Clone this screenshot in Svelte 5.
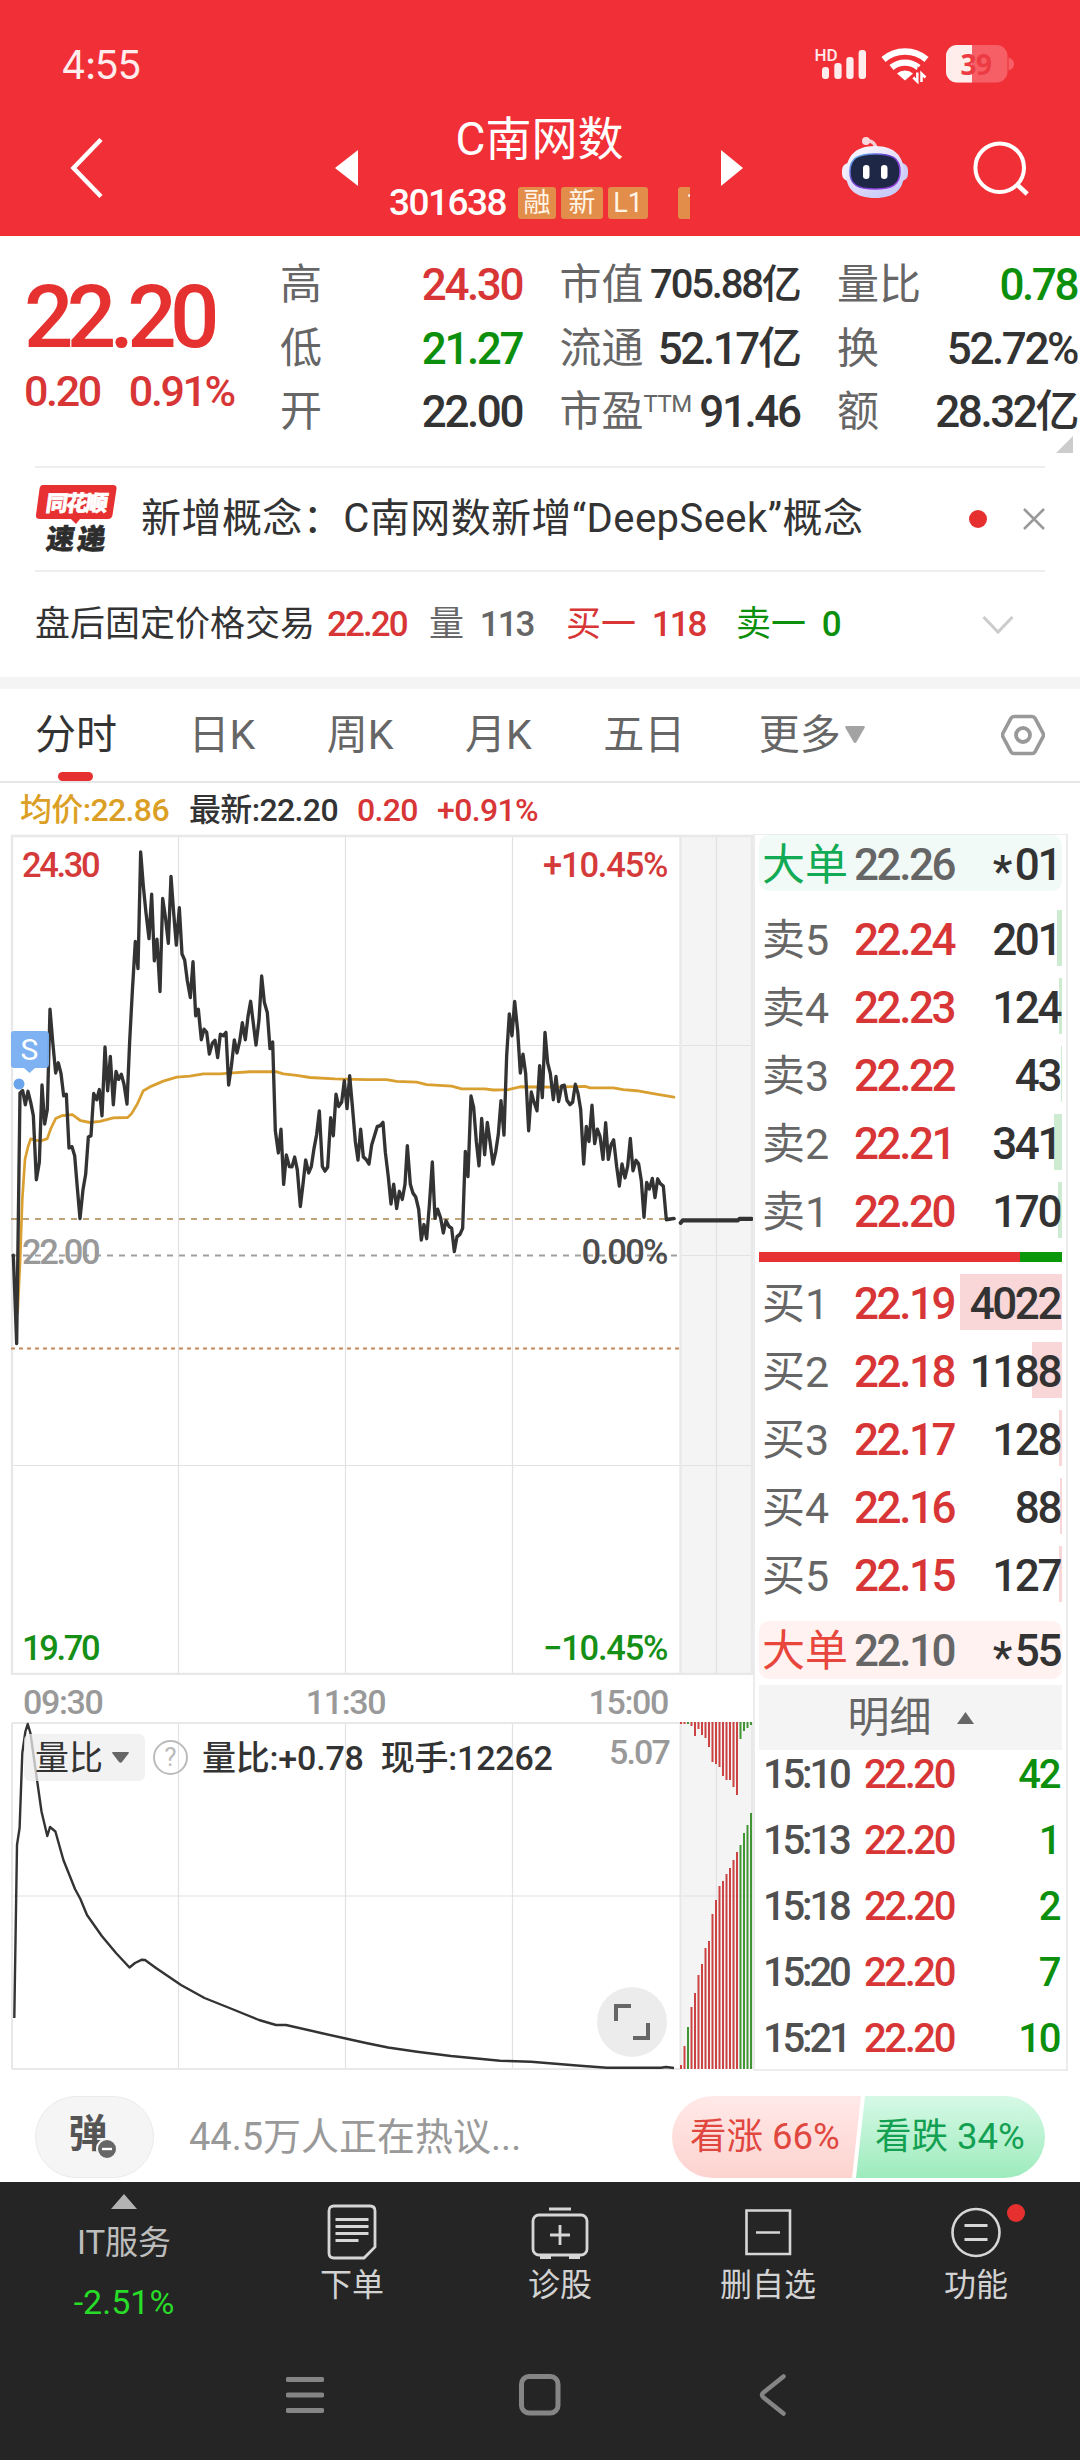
<script lang="ts">
	interface Quote {
		label: string;
		sup?: string;
		value: string;
		tone?: string;
		small?: boolean;
	}

	interface Level {
		label: string;
		price: string;
		volume: number;
		bar: number;
	}

	const quotes: Quote[] = [
		{ label: '高', value: '24.30', tone: 'up' },
		{ label: '市值', value: '705.88亿', small: true },
		{ label: '量比', value: '0.78', tone: 'down' },
		{ label: '低', value: '21.27', tone: 'down' },
		{ label: '流通', value: '52.17亿' },
		{ label: '换', value: '52.72%' },
		{ label: '开', value: '22.00' },
		{ label: '市盈', sup: 'TTM', value: '91.46' },
		{ label: '额', value: '28.32亿' }
	];

	const asks: Level[] = [
		{ label: '卖5', price: '22.24', volume: 201, bar: 5 },
		{ label: '卖4', price: '22.23', volume: 124, bar: 3 },
		{ label: '卖3', price: '22.22', volume: 43, bar: 1 },
		{ label: '卖2', price: '22.21', volume: 341, bar: 8 },
		{ label: '卖1', price: '22.20', volume: 170, bar: 4 }
	];

	const bids: Level[] = [
		{ label: '买1', price: '22.19', volume: 4022, bar: 102 },
		{ label: '买2', price: '22.18', volume: 1188, bar: 30 },
		{ label: '买3', price: '22.17', volume: 128, bar: 3 },
		{ label: '买4', price: '22.16', volume: 88, bar: 2 },
		{ label: '买5', price: '22.15', volume: 127, bar: 3 }
	];

	const trades = [
		{ time: '15:10', price: '22.20', volume: 42 },
		{ time: '15:13', price: '22.20', volume: 1 },
		{ time: '15:18', price: '22.20', volume: 2 },
		{ time: '15:20', price: '22.20', volume: 7 },
		{ time: '15:21', price: '22.20', volume: 10 }
	];

	// price and average lines live on a finer grid than the chart
	const priceLine =
		'40,1219 50,1466 60,765 68,758 76,797 84,760 92,790 100,828 109,1007 118,958 126,742 134,851 142,810 150,530 158,620 167,708 175,680 183,710 191,772 199,768 207,918 216,915 224,940 232,1030 240,1116 249,1035 257,992 265,888 273,884 281,766 290,783 298,755 306,828 315,636 323,758 331,662 340,797 348,704 356,726 364,712 372,740 381,795 389,620 397,480 406,340 414,416 422,90 430,185 438,260 447,332 455,208 463,394 471,334 480,480 488,220 496,270 505,345 513,158 521,260 529,350 538,246 546,375 554,392 562,450 571,497 579,397 587,548 595,530 604,615 612,586 620,594 628,655 637,625 645,617 653,665 661,600 670,604 678,595 686,742 694,690 703,616 711,652 719,620 727,568 736,615 744,550 752,508 760,570 768,630 777,560 785,437 793,510 802,540 810,640 818,622 826,870 835,932 843,866 851,1020 859,938 868,970 876,971 884,944 892,980 901,1082 909,1020 917,952 926,988 934,970 942,920 950,880 958,815 967,970 975,983 983,972 992,834 1000,884 1008,768 1016,802 1025,790 1033,730 1041,808 1049,716 1057,800 1066,900 1074,952 1082,866 1090,943 1098,950 1107,963 1115,910 1132,858 1140,856 1149,847 ' +
		'1156,930 1165,1000 1173,1075 1181,1020 1190,1088 1198,1040 1207,1062 1215,1020 1222,912 1231,1020 1239,1045 1247,1055 1256,1090 1264,1176 1272,1133 1280,1172 1288,1080 1297,958 1305,1115 1313,1090 1322,1115 1330,1156 1338,1122 1347,1138 1355,1143 1363,1208 1371,1167 1380,1160 1388,1143 1396,928 1404,998 1413,773 1421,805 1429,900 1437,968 1445,836 1454,937 1462,847 1470,900 1479,963 1487,930 1495,880 1503,786 1512,882 1520,660 1528,543 1536,604 1544,508 1553,590 1561,708 1569,656 1577,710 1586,870 1594,762 1602,790 1611,814 1619,688 1627,777 1635,595 1643,680 1651,710 1660,783 1668,718 1676,788 1685,745 1693,743 1701,785 1710,797 1718,790 1726,740 1734,765 1742,810 1751,963 1759,858 1767,900 1776,799 1784,906 1792,866 1800,885 1809,950 1817,848 1825,950 1833,910 1841,896 1850,970 1858,1025 1866,963 1875,1002 1883,970 1891,892 1899,982 1908,953 1916,963 1924,1010 1932,1112 1940,1015 1948,1033 1957,1004 1965,1057 1973,1005 1981,1018 1990,1025 1999,1119 2022,1116';
	const avgLine =
		'53,1378 60,1240 67,1060 75,950 84,915 92,893 110,897 125,898 142,892 152,865 167,836 185,828 217,825 242,842 270,847 300,844 340,834 383,833 395,822 412,795 430,758 455,745 490,731 530,720 570,717 610,711 660,711 700,708 750,705 830,705 850,711 890,715 930,721 1005,725 1100,727 1160,727 1190,732 1250,734 1280,741 1355,745 1385,753 1455,753 1480,756 1525,755 1560,747 1660,748 1755,746 1770,750 1840,750 1870,755 1910,758 1960,766 2022,776';
	const ratioLine =
		'14.3,296 17,123 19.6,106 22.3,31 25.4,9.5 27.7,2 30.4,11 36.6,55 41.5,89.5 47.3,114 50,105 55.4,109.5 63.4,138 75,167 80.4,177 87,193 101.8,214 116,231 129.5,245.5 135,241 142,237.7 145,238 156,246 181,263 204.5,276 232,287 259,298 276,303 286,303 321,311 366,321 388,325.5 417,329.7 451,334 500,338.7 531,339.7 580,343.7 607,345.7 661,345.7 666,345 674,346';

	// after-hours volume: [height from the bottom, height from the top]
	const afterHours = [
		[4, 2], [23, 2], [42, 2], [62, 4], [76, 14], [94, 7], [105, 13], [121, 16], [128, 25], [155, 40], [169, 42],
		[183, 45], [188, 54], [195, 58], [201, 58], [209, 65], [217, 73], [224, 17], [236, 9], [244, 6], [256, 3]
	];
	const isDown = (i: number) => i === 2 || i > 16;

	const gridX = [178.5, 345.5, 512.5];
</script>

<div class="screen">
	<header>
		<div class="status">
			<span class="clock">4:55</span>
			<svg width="204" height="44" viewBox="812 42 204 44">
				<text x="814.5" y="60.5" font-size="17" font-weight="500" fill="#ffe9ea">HD</text>
				<g fill="#ffecec">
					<rect x="822" y="67" width="7" height="12" rx="3" />
					<rect x="834.3" y="63" width="7.3" height="16" rx="3" />
					<rect x="846.3" y="57" width="7.3" height="22" rx="3" />
					<rect x="858.6" y="50" width="7.4" height="29" rx="3" />
				</g>
				<g fill="none" stroke="#fff" stroke-width="6.4">
					<path d="M883.5 59.5a33 33 0 0 1 43 0" />
					<path d="M891.5 67.5a21 21 0 0 1 27 0" />
				</g>
				<path d="M897 73.5a12 12 0 0 1 16 0l-8 7z" fill="#fff" />
				<path d="M917 72v10l-4.500-4M920.500 82.500v-9l4.500 4.500" fill="none" stroke="#f12f37" stroke-width="6" />
				<path d="M917.300 72.500v9l-4-4M921.500 82v-8.500l4 4" fill="none" stroke="#fff" stroke-width="2.500" />
				<rect x="946" y="45" width="61.500" height="37.500" rx="11" fill="#f75f66" />
				<path d="M972 45v37.500h-15a11 11 0 0 1-11-11V56a11 11 0 0 1 11-11z" fill="#ffedec" />
				<path d="M1008.500 57.500q5.500 1.500 5.500 6.500t-5.500 6.500z" fill="#f75f66" />
				<text class="battery" x="960.5" y="74.5">39</text>
			</svg>
		</div>
		<div class="titlebar">
			<svg class="back" width="36" height="64" viewBox="0 0 36 64"><path d="M32 3.500 4.500 32 32 60.500" fill="none" stroke="#fff" stroke-width="4.500" /></svg>
			<svg width="23" height="36" viewBox="0 0 23 36"><path d="M23 0v36L0 18z" fill="#fff" /></svg>
			<div class="title">
				<h1>C南网数</h1>
				<div class="code">
					<span class="num">301638</span>
					<i>融</i><i>新</i><i>L1</i><i class="cut">1</i>
				</div>
			</div>
			<svg width="23" height="36" viewBox="0 0 23 36"><path d="M0 0v36l22-18z" fill="#fff" /></svg>
			<svg class="robot" width="68" height="64" viewBox="841 136 68 64">
				<defs>
					<linearGradient id="shell" x1="0" y1="0" x2="0.6" y2="1">
						<stop offset="0" stop-color="#fff" />
						<stop offset="0.55" stop-color="#e4defa" />
						<stop offset="1" stop-color="#c9ccf7" />
					</linearGradient>
					<linearGradient id="rim" x1="0" y1="0" x2="1" y2="1">
						<stop offset="0" stop-color="#5bc6e8" />
						<stop offset="0.4" stop-color="#6a3fd0" />
						<stop offset="1" stop-color="#a53fe0" />
					</linearGradient>
				</defs>
				<path d="M866 141q9-1 10 8" fill="none" stroke="#f9cdd6" stroke-width="3.200" />
				<circle cx="866" cy="141" r="4" fill="#fbd9df" />
				<rect x="842" y="163" width="14" height="18" rx="7" fill="#f2edfc" />
				<rect x="894" y="163" width="14" height="18" rx="7" fill="#cfcdf6" />
				<path d="M875 146c20 0 29 11 29 27s-9 25-29 25-29-9-29-25 9-27 29-27z" fill="url(#shell)" />
				<path d="M875 154c17 0 25 4 25 17.500S892 189 875 189s-25-4-25-17.500S858 154 875 154z" fill="#1f2747" stroke="url(#rim)" stroke-width="1.500" />
				<rect x="863" y="165" width="6.500" height="14" rx="3.200" fill="#fff" />
				<rect x="881" y="165" width="6.500" height="14" rx="3.200" fill="#fff" />
			</svg>
			<svg class="search" width="58" height="58" viewBox="972 140 58 58">
				<circle cx="999.700" cy="168.700" r="24.300" fill="none" stroke="#fff" stroke-width="4" />
				<path d="M1017 185.500l10.200 9.500" stroke="#fff" stroke-width="4.500" />
			</svg>
		</div>
	</header>

	<section class="quote">
		<div class="last up">
			<strong>22.20</strong>
			<div class="num"><span>0.20</span><span>0.91%</span></div>
		</div>
		<div class="quote-grid">
			{#each quotes as q (q.label)}
				<div class="cell">
					<span class="label">{q.label}{#if q.sup}<sup>{q.sup}</sup>{/if}</span>
					<span class="num {q.tone ?? ''}" class:small={q.small}>{q.value}</span>
				</div>
			{/each}
		</div>
		<svg class="corner" width="17" height="17" viewBox="0 0 17 17"><path d="M17 0v17H0z" fill="#ccc" /></svg>
	</section>

	<section class="news">
		<svg class="brand" width="84" height="70" viewBox="35 484 84 70">
			<path d="M43 485h70q4 0 3.500 4l-4 26q-.8 4-4.500 4H80l-4 5-5-5H40q-4.500 0-4-4l3.500-26q.5-4 3.500-4z" fill="#e63031" />
			<text class="logo" x="45" y="511" font-size="22" textLength="62" fill="#fff" stroke="#fff" transform="skewX(-8)" style:transform-origin="45px 511px">同花顺</text>
			<text class="logo" x="45.500" y="549" font-size="28" textLength="59" fill="#2d2d2d" stroke="#2d2d2d" transform="skewX(-8)" style:transform-origin="45px 548px">速递</text>
		</svg>
		<p>新增概念：C南网数新增“DeepSeek”概念</p>
		<span class="dot"></span>
		<svg width="22" height="22" viewBox="0 0 22 22"><path d="M1 1l20 20M21 1 1 21" stroke="#999" stroke-width="2.500" /></svg>
	</section>

	<section class="fixed">
		<span class="name">盘后固定价格交易</span>
		<span class="num up price">22.20</span>
		<span class="muted vol">量 <b class="num">113</b></span>
		<span class="up buy">买一 <b class="num">118</b></span>
		<span class="down">卖一 <b class="num">0</b></span>
		<svg width="32" height="20" viewBox="0 0 32 20"><path d="M1.500 2 16 17 30.500 2" fill="none" stroke="#ccc" stroke-width="3" /></svg>
	</section>

	<nav class="tabs">
		<span class="active">分时</span>
		<span>日K</span>
		<span>周K</span>
		<span>月K</span>
		<span>五日</span>
		<span class="more">更多<svg width="20" height="17" viewBox="0 0 20 17"><path d="M1.500 0h17q2 0 1 2l-8 14q-1.500 2-3 0L.5 2q-1-2 1-2z" fill="#a3a3a3" /></svg></span>
		<svg class="gear" width="44" height="42" viewBox="0 0 44 42">
			<path d="M13 2.500h18q2 0 3 1.700l8 15q1 1.800 0 3.600l-8 15q-1 1.700-3 1.700H13q-2 0-3-1.700l-8-15q-1-1.800 0-3.600l8-15q1-1.700 3-1.700z" fill="none" stroke="#999" stroke-width="3.600" />
			<circle cx="22" cy="21" r="7" fill="none" stroke="#999" stroke-width="3.800" />
		</svg>
	</nav>

	<div class="legend">
		<span class="avg">均价:22.86</span><span class="now">最新:22.20</span><span class="up diff">0.20</span><span class="up">+0.91%</span>
	</div>

	<main>
		<div class="charts">
			<svg width="753" height="841" viewBox="0 834 753 841">
				<rect x="680" y="835" width="73" height="840" fill="#f4f4f4" />
				<g stroke="#e2e2e2" stroke-width="1.200">
					{#each gridX as x}<path d="M{x} 835V1675" />{/each}
					<path d="M716.500 835V1675M12 1045.500H753M680 1255.500H753M12 1465.500H753" />
				</g>
				<path d="M12 836H753M12 1674H753M12 835V1675M680.500 835V1675M752 835V1675" stroke="#e8e8e8" stroke-width="2.400" />
				<path d="M11 1219H676" stroke="#bda27c" stroke-width="2" stroke-dasharray="6 6" />
				<path d="M11 1255.500H677" stroke="#a0a0a0" stroke-width="1.800" stroke-dasharray="6 6" />
				<path d="M11 1348.500H679" stroke="#c68b55" stroke-width="2" stroke-dasharray="4 4" />
				<g class="axis">
					<text x="22" y="877" textLength="78.5" fill="#d53a3a">24.30</text>
					<text x="543" y="877" textLength="125.5" fill="#d53a3a">+10.45%</text>
					<text x="22" y="1264" textLength="78.5" fill="#999">22.00</text>
					<text x="581.5" y="1264" textLength="87" fill="#4d4d4d">0.00%</text>
					<text x="22" y="1660" textLength="78.5" fill="#168f16">19.70</text>
					<text x="543" y="1660" textLength="125.5" fill="#168f16">−10.45%</text>
				</g>
				<g transform="translate(0 820) scale(0.33333 0.35714)" fill="none" stroke-linejoin="round" stroke-linecap="round">
					<polyline points={avgLine} stroke="#d99f30" stroke-width="8" />
					<polyline points={priceLine} stroke="#333" stroke-width="10" />
					<path d="M2042 1128 2048 1121H2214L2218 1117H2255" stroke="#333" stroke-width="11.500" />
				</g>
				<path d="M14 1031h31q4 0 4 4v29q0 4-4 4H35l-5.500 5-5.500-5H14q-3 0-3-3v-31q0-3 3-3z" fill="#77aef1" fill-opacity="0.95" />
				<text x="29.500" y="1060" text-anchor="middle" font-size="30" font-weight="400" fill="#fff">S</text>
				<circle cx="19" cy="1084" r="5.500" fill="#6aa4ea" />
			</svg>

			<div class="times"><span>09:30</span><span>11:30</span><span>15:00</span></div>

			<div class="ratio">
				<svg class="plot" width="753" height="348" viewBox="0 0 753 348">
					<rect x="680" y="1" width="73" height="346" fill="#f4f4f4" />
					<g stroke="#e2e2e2" stroke-width="1.200">
						{#each gridX as x}<path d="M{x} 1V347" />{/each}
						<path d="M716.500 1V347M12 174H753" />
					</g>
					<path d="M12 1H753M12 347H680M12 1V347M680.500 1V347M752 1V347" stroke="#e8e8e8" stroke-width="2" />
					{#each afterHours as [low, high], i}
						<g class:down={isDown(i)} class="volume">
							<rect x={680 + i * 3.5} y={347 - low} width="2" height={low} />
							<rect x={680 + i * 3.5} y="0" width="2" height={high} />
						</g>
					{/each}
					<polyline points={ratioLine} fill="none" stroke="#333" stroke-width="2.400" stroke-linejoin="round" />
				</svg>
				<div class="ratio-bar">
					<span class="picker">量比<svg width="17" height="11" viewBox="0 0 17 11"><path d="M1 0h15q1.500 0 .5 1.500l-6.500 8.500q-1.500 1.500-3 0L.5 1.500Q-.5 0 1 0z" fill="#666" /></svg></span>
					<span class="help">?</span>
					<span class="current">量比:+0.78</span>
					<span class="current hand">现手:12262</span>
					<span class="num max">5.07</span>
				</div>
				<div class="expand">
					<svg width="36" height="36" viewBox="0 0 36 36"><path d="M2 17V2h15M34 19v15H19" fill="none" stroke="#666" stroke-width="4" /></svg>
				</div>
			</div>
		</div>

		<aside class="num">
			<div class="big sell"><span>大单</span><span>22.26</span><b><i>*</i>01</b></div>
			<div class="levels">
				{#each asks as level (level.label)}
					<div class="level ask">
						<span class="bar" style:width="{level.bar}px"></span>
						<span class="side">{level.label}</span><span class="up">{level.price}</span><b>{level.volume}</b>
					</div>
				{/each}
			</div>
			<div class="balance"><span style:width="86.3%"></span></div>
			<div class="levels">
				{#each bids as level (level.label)}
					<div class="level bid">
						<span class="bar" style:width="{level.bar}px"></span>
						<span class="side">{level.label}</span><span class="up">{level.price}</span><b>{level.volume}</b>
					</div>
				{/each}
			</div>
			<div class="big purchase"><span>大单</span><span>22.10</span><b><i>*</i>55</b></div>
			<div class="detail">明细<svg width="17" height="12" viewBox="0 0 17 12"><path d="M8.500 0 17 12H0z" fill="#666" /></svg></div>
			<div class="trades">
				{#each trades as t (t.time)}
					<div><span>{t.time}</span><span class="up">{t.price}</span><b class="down">{t.volume}</b></div>
				{/each}
			</div>
		</aside>
	</main>

	<section class="talk">
		<div class="danmu">
			<span>弹</span>
			<svg width="22" height="22" viewBox="0 0 22 22"><circle cx="11" cy="11" r="10" fill="#666" stroke="#f5f5f5" stroke-width="2" /><path d="M6 11h10" stroke="#fff" stroke-width="2.400" /></svg>
		</div>
		<p>44.5万人正在热议...</p>
		<div class="vote">
			<span class="bull">看涨 66%</span>
			<span class="bear">看跌 34%</span>
		</div>
	</section>

	<footer>
		<div class="actions">
			<div class="sector">
				<svg width="26" height="15" viewBox="0 0 26 15"><path d="M13 0 26 15H0z" fill="#b3b3b3" /></svg>
				<span>IT服务</span>
				<em>-2.51%</em>
			</div>
			<div class="action">
				<svg width="60" height="56" viewBox="0 0 60 56" fill="none" stroke="#d6d6d6" stroke-width="2.800">
					<path d="M12 2h36q5 0 5 5v36L42 54H12q-5 0-5-5V7q0-5 5-5z" />
					<path d="M13.500 15.500h33M13.500 22.500h33M13.500 29.500h33M13.500 36.500h23" />
				</svg>
				<span>下单</span>
			</div>
			<div class="action">
				<svg width="60" height="56" viewBox="0 0 60 56" fill="none" stroke="#d6d6d6" stroke-width="2.800">
					<rect x="3" y="11" width="54" height="40" rx="6" />
					<path d="M19 5h22M30 21v20M20 31h20" />
					<path d="M10 53h11M39 53h11" stroke-width="4" />
				</svg>
				<span>诊股</span>
			</div>
			<div class="action">
				<svg width="60" height="56" viewBox="0 0 60 56" fill="none" stroke="#d6d6d6" stroke-width="2.600">
					<path d="M8.500 6.500h43.500v43.500H8.500zM18 28.500h24" />
				</svg>
				<span>删自选</span>
			</div>
			<div class="action">
				<svg width="60" height="56" viewBox="0 0 60 56" fill="none" stroke="#d6d6d6" stroke-width="2.600">
					<circle cx="30" cy="28.500" r="23.500" />
					<path d="M18.500 21.500h23M18.500 35.500h23" stroke-width="3" />
				</svg>
				<span>功能</span>
				<i class="badge"></i>
			</div>
		</div>
		<div class="keys">
			<svg width="38" height="42" viewBox="0 0 38 42"><path d="M2 5.500h34M2 21h34M2 36.500h34" stroke="#858585" stroke-width="5" stroke-linecap="round" /></svg>
			<svg width="42" height="42" viewBox="0 0 42 42"><rect x="2.500" y="2.500" width="36.500" height="36.500" rx="7.500" fill="none" stroke="#858585" stroke-width="5" /></svg>
			<svg width="28" height="42" viewBox="0 0 28 42"><path d="M24.500 2.500 4.500 18.500q-3 2.500 0 5l20 16" fill="none" stroke="#858585" stroke-width="4.500" stroke-linecap="round" /></svg>
		</div>
	</footer>
</div>

<style>
	:global(body) {
		background: #fff;
	}

	.screen {
		width: 1080px;
		height: 2460px;
		overflow: hidden;
		display: flex;
		flex-direction: column;
		font-family: Roboto, 'Noto Sans CJK SC', sans-serif;
		color: #333;
		background: #fff;
		white-space: nowrap;
	}

	.screen :is(section, header, footer, nav, main, .legend) {
		box-sizing: border-box;
		flex-shrink: 0;
	}

	svg {
		display: block;
		flex-shrink: 0;
	}

	b,
	i,
	em {
		font-weight: inherit;
		font-style: normal;
	}

	.num {
		font-weight: 500;
		letter-spacing: -0.055em;
	}

	.up {
		color: #d83636;
	}
	.down {
		color: #0c8f0c;
	}
	.muted {
		color: #666;
	}

	/* header */
	header {
		height: 236px;
		background: #f12f37;
		color: #fff;
	}

	.status {
		display: flex;
		align-items: center;
		justify-content: space-between;
		height: 44px;
		padding: 42px 64px 14px 61px;
	}
	.clock {
		font-family: Inter, Roboto, sans-serif;
		font-size: 39px;
		letter-spacing: -0.03em;
		color: #ffeced;
	}
	.battery {
		font: bold 28px 'Noto Sans', sans-serif;
		letter-spacing: -0.5px;
		fill: #ec3b43;
	}

	.titlebar {
		display: flex;
		align-items: center;
		height: 136px;
	}
	.back {
		margin-left: 69px;
		margin-right: 230px;
	}
	.title {
		align-self: flex-start;
		width: 363px;
		display: flex;
		flex-direction: column;
		align-items: center;
	}
	h1 {
		margin: 7px 0 0;
		font-size: 46px;
		font-weight: 400;
		line-height: 64px;
	}
	.code {
		display: flex;
		align-items: center;
		width: 301px;
		height: 32px;
		margin-top: 16px;
		overflow-x: clip;
		font-size: 37px;
		line-height: 34px;
	}
	.code .num {
		letter-spacing: -0.041em;
	}
	.code i {
		flex-shrink: 0;
		box-sizing: border-box;
		width: 40px;
		height: 32px;
		margin-left: 5px;
		border-radius: 3px;
		background: #e38d4a;
		color: #fff5e6;
		font-size: 27px;
		line-height: 32px;
		text-align: center;
	}
	.code i:nth-of-type(1) {
		width: 38px;
		margin-left: auto;
	}
	.code i:nth-of-type(2) {
		width: 42px;
	}
	.code .cut {
		width: 12px;
		margin-left: 30px;
		padding-left: 8px;
		border-radius: 3px 0 0 3px;
		text-align: left;
	}
	.robot {
		margin-left: 97px;
	}
	.search {
		margin-left: 63px;
	}

	/* quote */
	.quote {
		display: flex;
		height: 230px;
		padding: 16px 0 0 24px;
		position: relative;
	}
	.last {
		width: 256px;
	}
	.last strong {
		display: block;
		margin-top: 19px;
		font-size: 87px;
		font-weight: 500;
		line-height: 92px;
		letter-spacing: -0.076em;
		color: #e63131;
	}
	.last div {
		display: flex;
		gap: 29px;
		margin-top: 3px;
		font-size: 43px;
		line-height: 50px;
	}
	.quote-grid {
		display: grid;
		grid-template-columns: 242px 240px 240px;
		grid-auto-rows: 63.5px;
		column-gap: 37.5px;
	}
	.cell {
		display: flex;
		justify-content: space-between;
		font-size: 44px;
		line-height: 66px;
	}
	.label {
		font-size: 42px;
		color: #666;
	}
	.cell .small {
		font-size: 40px;
	}
	sup {
		font-size: 24px;
		line-height: 1;
		vertical-align: 14px;
		letter-spacing: -0.5px;
	}
	.corner {
		position: absolute;
		right: 7px;
		bottom: 13px;
	}

	/* news */
	.news {
		display: flex;
		align-items: center;
		height: 106px;
		margin: 0 35px;
		border-top: 2px solid #eee;
		border-bottom: 2px solid #eee;
	}
	.news p {
		flex: 1;
		margin: 0 0 0 22px;
		font-size: 40px;
		line-height: 60px;
		letter-spacing: 0.45px;
	}
	.brand {
		overflow: visible;
	}
	.logo {
		font-family: 'Noto Sans CJK SC', sans-serif;
		font-weight: 900;
		stroke-width: 0.6px;
	}
	.dot {
		width: 18px;
		height: 18px;
		margin-right: 36px;
		border-radius: 50%;
		background: #e63030;
	}

	.fixed {
		display: flex;
		align-items: center;
		height: 105px;
		padding: 0 66px 0 35px;
		font-size: 35px;
		line-height: 105px;
	}
	.fixed .name {
		width: 292px;
	}
	.fixed .price {
		width: 102px;
	}
	.fixed .vol {
		width: 137px;
	}
	.fixed .buy {
		width: 170px;
	}
	.fixed b {
		margin-left: 7px;
	}
	.fixed svg {
		margin-left: auto;
	}

	/* tabs */
	.tabs {
		display: flex;
		align-items: center;
		height: 106px;
		padding: 0 35px;
		border-top: 12px solid #f4f4f4;
		border-bottom: 2px solid #e6e6e6;
		font-size: 41px;
		line-height: 92px;
		color: #666;
	}
	.tabs span {
		margin-right: 71.5px;
	}
	.tabs .active {
		position: relative;
		color: #333;
	}
	.tabs .active::after {
		content: '';
		position: absolute;
		left: 23px;
		bottom: 0;
		width: 35px;
		height: 9px;
		border-radius: 5px;
		background: #e63030;
	}
	.tabs .more {
		margin-left: 2px;
	}
	.tabs span svg {
		display: inline-block;
		margin-left: 4px;
		vertical-align: 6px;
	}
	.tabs .gear {
		margin-left: auto;
	}

	.legend {
		display: flex;
		height: 51px;
		padding-left: 20px;
		font-size: 32px;
		font-weight: 500;
		line-height: 55px;
		letter-spacing: -0.02em;
	}
	.avg {
		width: 169px;
		color: #dc9f25;
	}
	.now {
		width: 168px;
	}
	.diff {
		width: 80px;
	}

	/* charts */
	main {
		display: flex;
		height: 1237px;
	}
	.charts {
		width: 753px;
	}
	.axis {
		font-size: 34.5px;
		font-weight: 500;
	}
	.times {
		display: flex;
		justify-content: space-between;
		height: 47px;
		padding: 0 85px 0 23px;
		font-size: 34px;
		font-weight: 500;
		letter-spacing: -0.04em;
		line-height: 54px;
		color: #999;
	}
	.ratio {
		position: relative;
		height: 348px;
	}
	.plot {
		position: absolute;
	}
	.volume {
		fill: #cb4343;
	}
	.volume.down {
		fill: #429535;
	}
	.ratio-bar {
		position: relative;
		display: flex;
		align-items: center;
		height: 47px;
		padding: 12px 84px 0 24px;
		font-size: 34px;
		line-height: 46px;
	}
	.picker {
		display: flex;
		align-items: center;
		gap: 9px;
		box-sizing: border-box;
		width: 121px;
		height: 47px;
		padding-left: 11px;
		border-radius: 6px;
		background: rgba(238, 238, 238, 0.75);
	}
	.help {
		box-sizing: border-box;
		width: 35px;
		height: 35px;
		margin: 0 14px 0 8px;
		border: 2.5px solid #bbb;
		border-radius: 50%;
		font-size: 26px;
		line-height: 31px;
		text-align: center;
		color: #bbb;
	}
	.current {
		font-weight: 500;
		letter-spacing: -0.2px;
	}
	.hand {
		margin-left: 17px;
	}
	.max {
		margin-left: auto;
		margin-top: -11px;
		color: #999;
	}
	.expand {
		position: absolute;
		left: 597px;
		top: 265px;
		display: grid;
		place-items: center;
		width: 70px;
		height: 70px;
		border-radius: 50%;
		background: #ececec;
	}

	/* order book */
	aside {
		box-sizing: border-box;
		width: 315px;
		height: 1237px;
		padding: 0 4px;
		border: 2px solid #ececec;
		border-top-width: 1px;
		font-size: 44px;
	}
	.big,
	.level {
		display: grid;
		grid-template-columns: 92px 1fr auto;
		height: 56px;
		padding: 0 2px 0 3px;
		line-height: 60px;
	}
	.big {
		border-radius: 10px;
		color: #666;
	}
	.big span:first-child {
		font-size: 43px;
		font-weight: 400;
		letter-spacing: 0;
	}
	.big b,
	.level b {
		color: #333;
	}
	.big i {
		display: inline-block;
		margin-right: 5px;
		line-height: 40px;
		vertical-align: -7px;
	}
	.sell {
		background: #f1faf6;
	}
	.sell span:first-child {
		color: #11ab55;
	}
	.purchase {
		margin-top: 19px;
		height: 58px;
		background: #fff2f1;
	}
	.purchase span:first-child {
		color: #e8453c;
	}
	.levels {
		display: flex;
		flex-direction: column;
		gap: 12px;
	}
	.sell + .levels {
		margin-top: 19px;
	}
	.level {
		position: relative;
	}
	.level span,
	.level b {
		position: relative;
	}
	.level .side {
		font-size: 43px;
		font-weight: 400;
		letter-spacing: 0;
		color: #666;
	}
	.level .bar {
		position: absolute;
		top: 0;
		right: 0;
		height: 56px;
	}
	.ask .bar {
		background: #cdebd0;
	}
	.bid .bar {
		background: #f9d6d7;
	}
	.balance {
		height: 10px;
		margin: 14px 0 12px;
		background: #0a980a;
	}
	.balance span {
		display: block;
		height: 10px;
		background: #e63232;
	}
	.detail {
		display: flex;
		align-items: center;
		justify-content: center;
		gap: 25px;
		height: 65px;
		margin-top: 6px;
		background: #f4f4f4;
		font-size: 42px;
		font-weight: 400;
		line-height: 64px;
		letter-spacing: 0;
		color: #666;
	}
	.trades {
		margin-top: -9px;
		font-size: 40px;
	}
	.trades div {
		display: grid;
		grid-template-columns: 101px 1fr auto;
		height: 66px;
		padding: 0 3px 0 4px;
		line-height: 68px;
		color: #505050;
	}
	.trades span:first-child {
		letter-spacing: -0.08em;
	}

	/* discussion */
	.talk {
		display: flex;
		height: 111px;
		padding: 25px 35px 4px;
	}
	.danmu {
		box-sizing: border-box;
		position: relative;
		width: 119px;
		height: 82px;
		border: 1px solid #ebebeb;
		border-radius: 41px;
		background: #f5f5f5;
		font-size: 39px;
		font-weight: 700;
		line-height: 75px;
		text-align: center;
		color: #555;
		padding-right: 13px;
	}
	.danmu svg {
		position: absolute;
		left: 60px;
		top: 41px;
	}
	.talk p {
		flex: 1;
		margin: 0 0 0 35px;
		font-size: 38px;
		line-height: 82px;
		color: #999;
	}
	.vote {
		display: flex;
		height: 82px;
		overflow: hidden;
		border-radius: 41px;
		font-size: 36.5px;
		line-height: 82px;
	}
	.vote span {
		box-sizing: border-box;
		height: 82px;
	}
	.bull {
		width: 189px;
		padding-left: 18px;
		background: linear-gradient(#ffe9e8, #fdd3cf);
		clip-path: polygon(0 0, 189px 0, 180px 100%, 0 100%);
		color: #e0473f;
	}
	.bear {
		width: 189px;
		margin-left: -5px;
		padding-left: 19px;
		background: linear-gradient(#d6f9e6, #9debbd);
		clip-path: polygon(9px 0, 100% 0, 100% 100%, 0 100%);
		color: #14a052;
	}

	/* bottom bars */
	footer {
		height: 279px;
		background: #252525;
	}
	.actions {
		display: grid;
		grid-template-columns: 248px repeat(4, 208px);
		height: 150px;
		padding-top: 12px;
		font-size: 32px;
		color: #d2d2d2;
	}
	.sector,
	.action {
		display: flex;
		flex-direction: column;
		align-items: center;
		position: relative;
	}
	.sector span {
		margin-top: 13px;
		font-size: 33px;
		line-height: 42px;
		color: #bdbdbd;
	}
	.sector em {
		margin-top: 17px;
		font-size: 34px;
		line-height: 42px;
		color: #28dd28;
	}
	.action svg {
		margin-top: 10px;
	}
	.action span {
		margin-top: 3px;
		line-height: 44px;
	}
	.badge {
		position: absolute;
		left: 135px;
		top: 10px;
		width: 18px;
		height: 18px;
		border-radius: 50%;
		background: #e63030;
	}
	.keys {
		display: flex;
		justify-content: space-between;
		padding: 30px 293px 0 286px;
	}
	.keys svg:nth-child(2) {
		margin-left: -4px;
	}
</style>
